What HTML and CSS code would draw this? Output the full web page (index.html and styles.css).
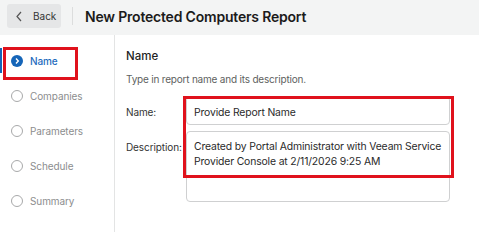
FILE: index.html
```html
<!DOCTYPE html>
<html lang="en">
<head>
    <meta charset="UTF-8">
    <title>New Protected Computers Report</title>
    <link rel="stylesheet" href="styles.css">
</head>
<body>
    <div class="header">
        <button class="back-btn">
            <svg class="back-icon" width="8" height="11" viewBox="0 0 8 11"><path d="M6 1 L2 5.5 L6 10" fill="none" stroke="#555" stroke-width="1.2"/></svg>
            Back
        </button>
        <div class="header-sep"></div>
        <h1 class="title">New Protected Computers Report</h1>
    </div>

    <div class="wizard">
        <div class="steps">
            <div class="step active">
                <span class="step-icon">
                    <svg width="12" height="12" viewBox="0 0 12 12"><circle cx="6" cy="6" r="6" fill="#1565b8"/><path d="M5 3.5 L7.3 6 L5 8.5" fill="none" stroke="#fff" stroke-width="1.4"/></svg>
                </span>
                Name
            </div>
            <div class="step"><span class="step-icon circle"></span>Companies</div>
            <div class="step"><span class="step-icon circle"></span>Parameters</div>
            <div class="step"><span class="step-icon circle"></span>Schedule</div>
            <div class="step"><span class="step-icon circle"></span>Summary</div>
        </div>

        <div class="content">
            <h2 class="section-title">Name</h2>
            <p class="section-desc">Type in report name and its description.</p>

            <div class="form">
                <div class="highlight"></div>
                <div class="form-row">
                    <label class="form-label">Name:</label>
                    <div class="field input">Provide Report Name</div>
                </div>
                <div class="form-row">
                    <label class="form-label">Description:</label>
                    <div class="field textarea">Created by Portal Administrator with Veeam Service Provider Console at 2/11/2026 9:25 AM</div>
                </div>
            </div>
        </div>
    </div>
</body>
</html>
```

FILE: styles.css
```css
* {
    margin: 0;
    padding: 0;
    box-sizing: border-box;
}

body {
    font-family: Inter, 'Liberation Sans', sans-serif;
    background: #fff;
    color: #222;
    width: 479px;
    height: 232px;
    overflow: hidden;
}

.header {
    height: 35px;
    background: #f3f4f4;
    display: flex;
    align-items: center;
    padding-left: 7px;
}

.back-btn {
    width: 54px;
    height: 24px;
    margin-top: -3px;
    border: none;
    border-radius: 3px;
    background: #e5e6e7;
    font-family: inherit;
    font-size: 10px;
    color: #333;
    display: flex;
    align-items: center;
    gap: 10px;
    padding-left: 8px;
}

.header-sep {
    width: 1px;
    height: 18px;
    margin-top: -3px;
    background: #dcdddd;
    margin-left: 11px;
    margin-right: 12px;
}

.title {
    font-size: 14px;
    font-weight: 600;
    color: #1b1b1b;
    margin-top: -3px;
    letter-spacing: -0.2px;
}

.wizard {
    display: flex;
    height: 197px;
}

.steps {
    width: 115px;
    border-right: 1px solid #e3e4e4;
    padding-top: 12px;
}

.step {
    position: relative;
    height: 35px;
    display: flex;
    align-items: center;
    gap: 7px;
    padding-left: 11px;
    font-size: 10px;
    letter-spacing: -0.1px;
    color: #8c8d8e;
}

.step.active {
    color: #1e6bbd;
    font-weight: 500;
    height: 27px;
    margin-bottom: 4px;
}

.step.active::before {
    content: '';
    position: absolute;
    left: 0;
    top: 1px;
    width: 2px;
    height: 25px;
    background: #1565b8;
}

.step.active::after {
    content: '';
    position: absolute;
    left: 3px;
    top: 0;
    width: 69px;
    height: 27px;
    border: 3px solid #e0121c;
}

.step-icon {
    width: 12px;
    height: 12px;
    display: flex;
}

.step-icon.circle {
    border: 1px solid #a8a9aa;
    border-radius: 50%;
}

.content {
    flex: 1;
    padding-left: 11px;
    padding-top: 14px;
}

.section-title {
    font-size: 11.5px;
    font-weight: 500;
    color: #1f1f1f;
}

.section-desc {
    font-size: 10px;
    letter-spacing: -0.2px;
    color: #5e5f60;
    margin-top: 10px;
}

.form {
    position: relative;
    margin-top: 11px;
    width: 327px;
}

.highlight {
    position: absolute;
    left: 57px;
    top: 0;
    width: 271px;
    height: 82px;
    border: 3px solid #e0121c;
    pointer-events: none;
}

.form-row {
    display: flex;
    align-items: flex-start;
    margin-bottom: 6px;
}

.form-label {
    width: 60px;
    font-size: 10px;
    letter-spacing: -0.1px;
    color: #333;
    padding-top: 10px;
}

.field {
    width: 264px;
    border: 1px solid #cfd0d1;
    border-radius: 4px;
    font-size: 10.4px;
    letter-spacing: -0.15px;
    color: #2a2a2a;
    padding: 9px 4px 9px 7px;
}

.input {
    height: 29px;
}

.textarea {
    height: 71px;
    line-height: 15px;
    padding-top: 7px;
}
```
